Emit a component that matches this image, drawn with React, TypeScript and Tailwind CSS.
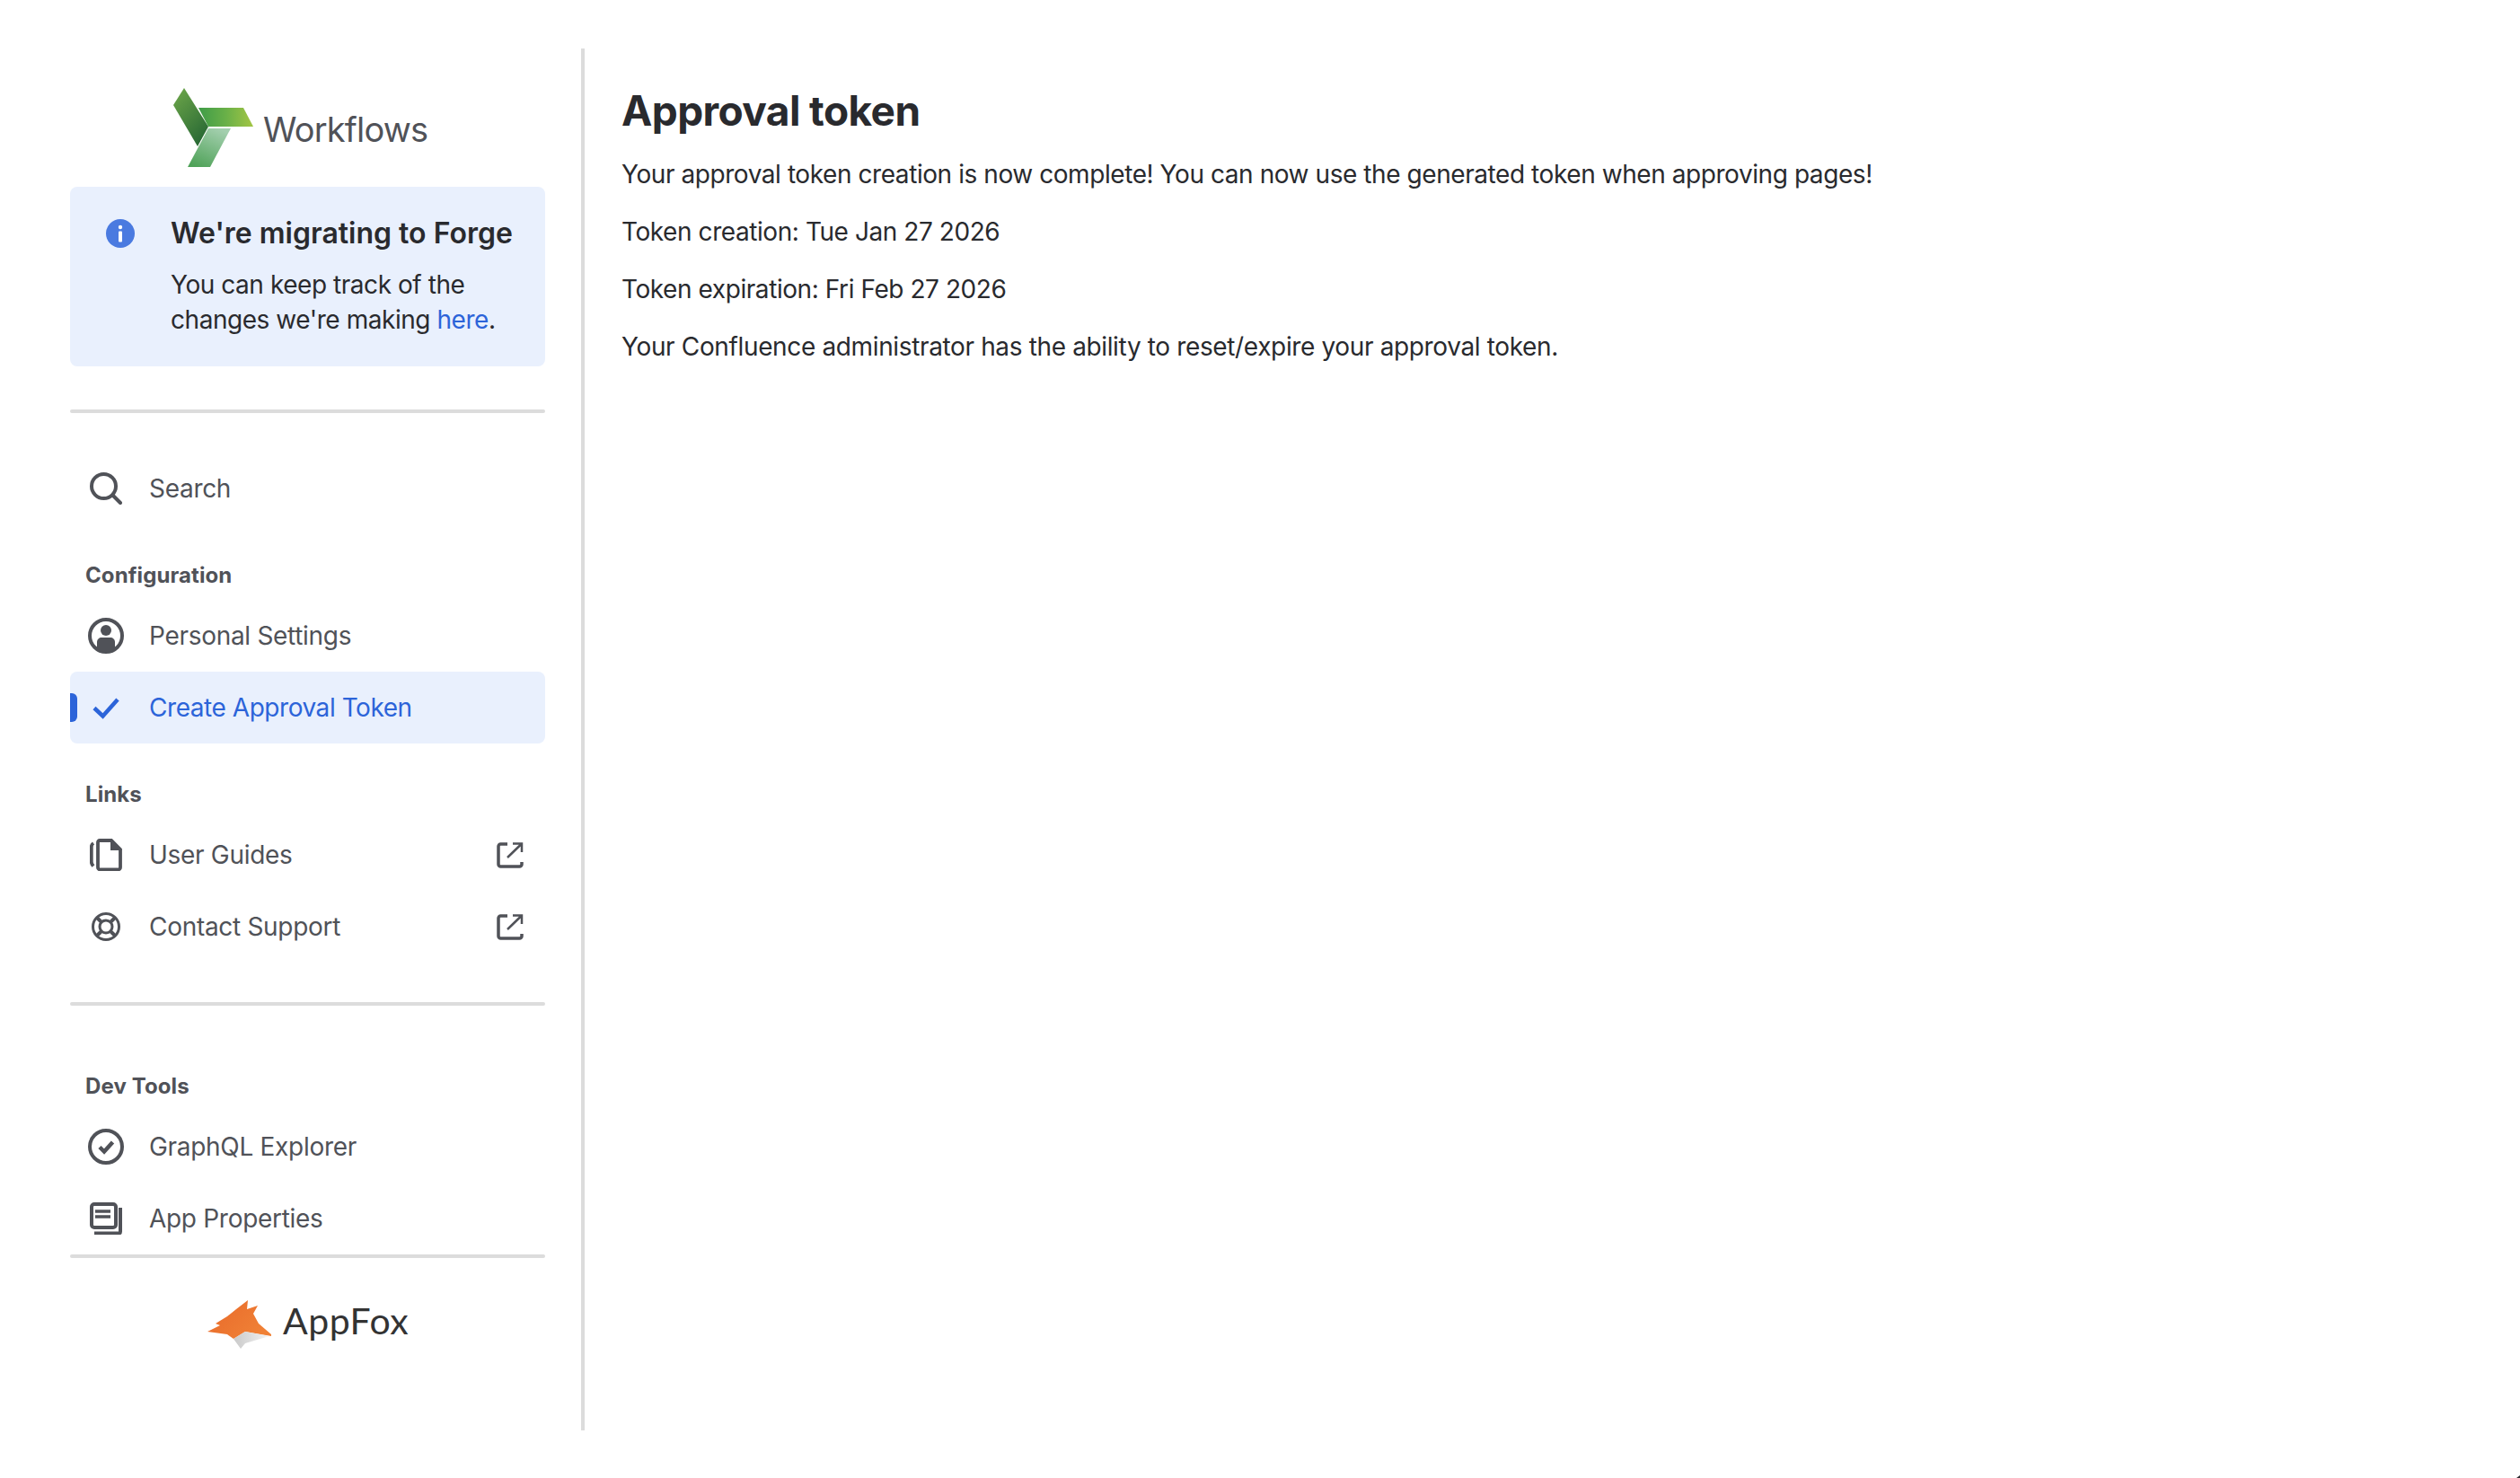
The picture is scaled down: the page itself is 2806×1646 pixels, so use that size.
import React from 'react';

const WorkflowsLogo = () => (
  <svg width="130" height="110" viewBox="0 0 130 110" className="shrink-0">
    <defs>
      <linearGradient id="wfLeft" x1="0" y1="0" x2="0.6" y2="1">
        <stop offset="0" stopColor="#6fa84a" />
        <stop offset="1" stopColor="#2b6b35" />
      </linearGradient>
      <linearGradient id="wfRight" x1="0" y1="0" x2="1" y2="0">
        <stop offset="0" stopColor="#3f9c48" />
        <stop offset="0.5" stopColor="#69b048" />
        <stop offset="1" stopColor="#a3c544" />
      </linearGradient>
      <linearGradient id="wfBottom" x1="0.7" y1="0" x2="0.2" y2="1">
        <stop offset="0" stopColor="#a3cfae" />
        <stop offset="1" stopColor="#4fa258" />
      </linearGradient>
    </defs>
    <polygon points="36,14 24,33 51,79 63,57" fill="url(#wfLeft)" />
    <polygon points="52,36 102,36 113,57 63,57" fill="url(#wfRight)" />
    <polygon points="63,59 88,59 65,102 40,102" fill="url(#wfBottom)" />
  </svg>
);

const FoxLogo = () => (
  <svg width="100" height="80" viewBox="0 0 100 80" className="shrink-0">
    <defs>
      <linearGradient id="foxBody" x1="0" y1="0" x2="1" y2="0.6">
        <stop offset="0" stopColor="#e8692a" />
        <stop offset="1" stopColor="#f08136" />
      </linearGradient>
      <linearGradient id="foxChin" x1="0" y1="0" x2="1" y2="0">
        <stop offset="0" stopColor="#c9c9c9" />
        <stop offset="1" stopColor="#f4f4f4" />
      </linearGradient>
    </defs>
    <polygon
      points="82,55 68,43 62,32 67,23 55,27 56,17 43,27 33,35 20,43 25,45 11,52 33,55 40,60 53,52 82,57"
      fill="url(#foxBody)"
    />
    <polygon points="40,60 48,71 53,65 80,57 53,52" fill="url(#foxChin)" />
  </svg>
);

const SearchIcon = () => (
  <svg viewBox="0 0 36 36" className="size-9" fill="none" stroke="currentColor" strokeWidth="4">
    <circle cx="15.500" cy="15.500" r="13.500" />
    <path d="M25.500 25.500l8.500 8.500" strokeLinecap="round" />
  </svg>
);

const PersonIcon = () => (
  <svg viewBox="0 0 40 40" className="size-10" fill="none">
    <circle cx="20" cy="20" r="18" stroke="currentColor" strokeWidth="4" />
    <circle cx="20" cy="14" r="6" fill="currentColor" />
    <path d="M10 35v-8c0-3 2.500-5 5-5h10c2.500 0 5 2 5 5v8a18 18 0 0 1-20 0z" fill="currentColor" />
  </svg>
);

const CheckIcon = () => (
  <svg viewBox="0 0 36 36" className="size-9" fill="none" stroke="currentColor" strokeWidth="4.500">
    <path d="M5 18.500l9.500 9L31 9" />
  </svg>
);

const GuidesIcon = () => (
  <svg viewBox="0 0 36 36" className="size-9" fill="none" stroke="currentColor" strokeWidth="3.800">
    <path d="M11 2h13l10 10v20a2.500 2.500 0 0 1-2.500 2.500h-20A2.500 2.500 0 0 1 9 32V4a2 2 0 0 1 2-2z" />
    <path d="M23 0v13h13z" fill="currentColor" stroke="none" />
    <path d="M4 5C2.500 6 1.800 7 1.800 9v17c0 2 .7 3 2.200 4.500" />
  </svg>
);

const SupportIcon = () => (
  <svg viewBox="0 0 32 32" className="size-8" fill="none" stroke="currentColor" strokeWidth="3">
    <circle cx="16" cy="16" r="14.500" />
    <circle cx="16" cy="16" r="7" />
    <path d="M6 6l5 5M26 6l-5 5M6 26l5-5M26 26l-5-5" strokeWidth="4" />
  </svg>
);

const ExternalIcon = () => (
  <svg viewBox="0 0 30 30" className="size-[30px]" fill="none" stroke="currentColor" strokeWidth="3.500">
    <path d="M12 3H4.500A2.500 2.500 0 0 0 2 5.500v20A2.500 2.500 0 0 0 4.500 28h21a2.500 2.500 0 0 0 2.500-2.500V23" />
    <path d="M12 18L27 3.500M18 2.500h10V12" strokeWidth="2.500" />
  </svg>
);

const CircleCheckIcon = () => (
  <svg viewBox="0 0 40 40" className="size-10" fill="none" stroke="currentColor" strokeWidth="4">
    <circle cx="20" cy="20" r="18" />
    <path d="M13 20.500l5 5 9.500-10.500" strokeWidth="4.500" />
  </svg>
);

const PropertiesIcon = () => (
  <svg viewBox="0 0 36 36" className="size-9" fill="none" stroke="currentColor">
    <rect x="2" y="2" width="27" height="26" rx="3" strokeWidth="4" />
    <path d="M6 10h17M6 16h17" strokeWidth="3.500" />
    <path d="M34 6v26.500a2 2 0 0 1-2 2H5" strokeWidth="4" />
  </svg>
);

function NavRow({
  icon,
  label,
  external,
  active,
}: {
  icon: React.ReactNode;
  label: string;
  external?: boolean;
  active?: boolean;
}) {
  return (
    <div
      className={
        active
          ? 'relative flex h-20 items-center rounded-lg bg-[#e9f0fd] pl-5 pr-6 tracking-[-0.45px] text-[#2c64d9]'
          : 'flex h-20 items-center pl-5 pr-6 tracking-[-0.3px] text-[#505258]'
      }
    >
      {active && <span className="absolute left-0 top-6 h-8 w-2 rounded-r-md bg-[#2c64d9]" />}
      <span className="flex w-10 shrink-0 justify-center">{icon}</span>
      <span className="ml-7 flex-1 text-[28px] leading-10">{label}</span>
      {external && <ExternalIcon />}
    </div>
  );
}

const SectionLabel = ({ children }: { children: React.ReactNode }) => (
  <div className="flex h-14 items-center pl-[17px] pt-[2px] text-[24px] font-bold tracking-[0.1px] text-[#505258]">{children}</div>
);

const Divider = () => <div className="h-1 rounded-sm bg-[#dcdcdc]" />;

export default function App() {
  return (
    <div className="relative flex h-[1646px] w-[2806px] bg-white pt-[54px] font-['Inter',sans-serif] text-[#292a2e]">
      <aside className="h-[1539px] w-[651px] shrink-0 border-r-4 border-[#dcdcdc] pl-[78px] pr-10">
        <div className="flex h-[154px] items-start pl-[91px] pt-[30px]">
          <WorkflowsLogo />
          <span className="-ml-[6px] mt-[35px] text-[38px] leading-[50px] tracking-[-0.8px] text-[#505258]">Workflows</span>
        </div>

        <div className="flex h-[200px] rounded-lg bg-[#e9f0fd] pl-10 pt-9">
          <svg viewBox="0 0 32 32" className="size-8 shrink-0">
            <circle cx="16" cy="16" r="16" fill="#4a7ae0" />
            <circle cx="16" cy="9" r="2.200" fill="#fff" />
            <rect x="14" y="13.500" width="4" height="12" rx="1" fill="#fff" />
          </svg>
          <div className="-mt-1 ml-10">
            <div className="text-[32px] leading-10 font-semibold">We're migrating to Forge</div>
            <p className="mt-[18px] text-[28px] leading-[39px] tracking-[-0.45px]">
              You can keep track of the
              <br />
              changes we're making <span className="text-[#2c64d9]">here</span>.
            </p>
          </div>
        </div>

        <div className="mt-12">
          <Divider />
        </div>

        <div className="mt-11">
          <NavRow icon={<SearchIcon />} label="Search" />
        </div>
        <div className="mt-7">
          <SectionLabel>Configuration</SectionLabel>
        </div>
        <NavRow icon={<PersonIcon />} label="Personal Settings" />
        <NavRow icon={<CheckIcon />} label="Create Approval Token" active />
        <div className="mt-7">
          <SectionLabel>Links</SectionLabel>
        </div>
        <NavRow icon={<GuidesIcon />} label="User Guides" external />
        <NavRow icon={<SupportIcon />} label="Contact Support" external />

        <div className="mt-11">
          <Divider />
        </div>

        <div className="mt-[61px]">
          <SectionLabel>Dev Tools</SectionLabel>
        </div>
        <NavRow icon={<CircleCheckIcon />} label="GraphQL Explorer" />
        <NavRow icon={<PropertiesIcon />} label="App Properties" />
        <Divider />

        <div className="mt-[30px] flex items-center pl-[142px]">
          <FoxLogo />
          <span className="-ml-[5px] font-['Lato',sans-serif] text-[41px] leading-[50px] tracking-[0.5px] text-[#333333]">AppFox</span>
        </div>
      </aside>

      <main className="flex-1 pl-[41px] text-[28px] leading-10 tracking-[-0.43px]">
        <h1 className="mt-[40px] text-[46px] leading-[58px] font-bold tracking-[-0.6px]">Approval token</h1>
        <p className="mt-[22px]">
          Your approval token creation is now complete! You can now use the generated token when approving pages!
        </p>
        <p className="mt-6">Token creation: Tue Jan 27 2026</p>
        <p className="mt-6">Token expiration: Fri Feb 27 2026</p>
        <p className="mt-6 tracking-[-0.36px]">Your Confluence administrator has the ability to reset/expire your approval token.</p>
      </main>

      <svg viewBox="0 0 4 3" className="absolute bottom-0 right-0 h-[3px] w-1 text-[#292a2e]">
        <polygon points="4,0 4,3 0,3" fill="currentColor" />
      </svg>
    </div>
  );
}
